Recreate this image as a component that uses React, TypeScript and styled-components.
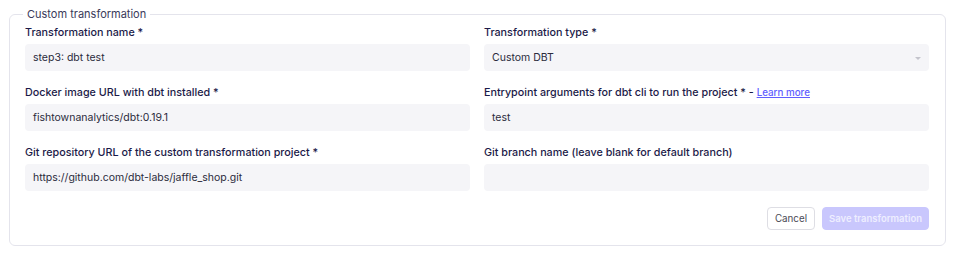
import React from 'react';
import styled, { createGlobalStyle } from 'styled-components';

const GlobalStyle = createGlobalStyle`
  body {
    margin: 0;
    background: #ffffff;
    font-family: Inter, "Noto Sans", sans-serif;
  }
`;

const Page = styled.div`
  padding: 7px 14px 0 9px;
`;

const Fieldset = styled.fieldset`
  margin: 0;
  padding: 5px 16px 15px 15px;
  border: 1px solid #e4e4ec;
  border-radius: 6px;
  min-width: 0;
`;

const Legend = styled.legend`
  font-size: 11px;
  line-height: 14px;
  color: #3a3a5a;
  padding: 0 4px;
  margin-left: -2px;
`;

const Grid = styled.div`
  display: grid;
  grid-template-columns: 1fr 1fr;
  column-gap: 14px;
  row-gap: 15px;
`;

const Field = styled.div`
  display: flex;
  flex-direction: column;
  gap: 4px;
  min-width: 0;
`;

const Label = styled.label`
  font-size: 10.75px;
  line-height: 14px;
  font-weight: 500;
  color: #1b1a48;
  white-space: nowrap;
`;

const LearnMore = styled.a`
  color: #615eff;
  font-size: 9.8px;
  text-decoration: underline;
  cursor: pointer;
`;

const Input = styled.div`
  position: relative;
  height: 27px;
  box-sizing: border-box;
  padding: 0 8px;
  display: flex;
  align-items: center;
  background: #f5f5f8;
  border-radius: 4px;
  font-size: 10.5px;
  color: #2b2b3c;
`;

const Caret = styled.span`
  position: absolute;
  right: 8px;
  top: 13px;
  width: 0;
  height: 0;
  border-left: 3px solid transparent;
  border-right: 3px solid transparent;
  border-top: 3px solid #c4c4cc;
`;

const Actions = styled.div`
  display: flex;
  justify-content: flex-end;
  gap: 7px;
  margin-top: 16px;
`;

const Button = styled.button<{ $primary?: boolean }>`
  height: 23px;
  box-sizing: border-box;
  padding: 0 ${(p) => (p.$primary ? 6 : 7)}px;
  border-radius: 4px;
  font-family: Inter, "Noto Sans", sans-serif;
  font-size: ${(p) => (p.$primary ? 9.5 : 9.8)}px;
  font-weight: ${(p) => (p.$primary ? 600 : 400)};
  border: 1px solid ${(p) => (p.$primary ? '#c9c7fd' : '#dedee4')};
  background: ${(p) => (p.$primary ? '#c9c7fd' : '#ffffff')};
  color: ${(p) => (p.$primary ? '#eeeeff' : '#4a4a55')};
  cursor: pointer;
`;

const App = () => (
  <Page>
    <GlobalStyle />
    <Fieldset>
      <Legend>Custom transformation</Legend>
      <Grid>
        <Field>
          <Label>Transformation name *</Label>
          <Input>step3: dbt test</Input>
        </Field>
        <Field>
          <Label>Transformation type *</Label>
          <Input>
            Custom DBT
            <Caret />
          </Input>
        </Field>
        <Field>
          <Label>Docker image URL with dbt installed *</Label>
          <Input>fishtownanalytics/dbt:0.19.1</Input>
        </Field>
        <Field>
          <Label>
            Entrypoint arguments for dbt cli to run the project * - <LearnMore>Learn more</LearnMore>
          </Label>
          <Input>test</Input>
        </Field>
        <Field>
          <Label>Git repository URL of the custom transformation project *</Label>
          <Input>https://github.com/dbt-labs/jaffle_shop.git</Input>
        </Field>
        <Field>
          <Label>Git branch name (leave blank for default branch)</Label>
          <Input />
        </Field>
      </Grid>
      <Actions>
        <Button>Cancel</Button>
        <Button $primary>Save transformation</Button>
      </Actions>
    </Fieldset>
  </Page>
);

export default App;
